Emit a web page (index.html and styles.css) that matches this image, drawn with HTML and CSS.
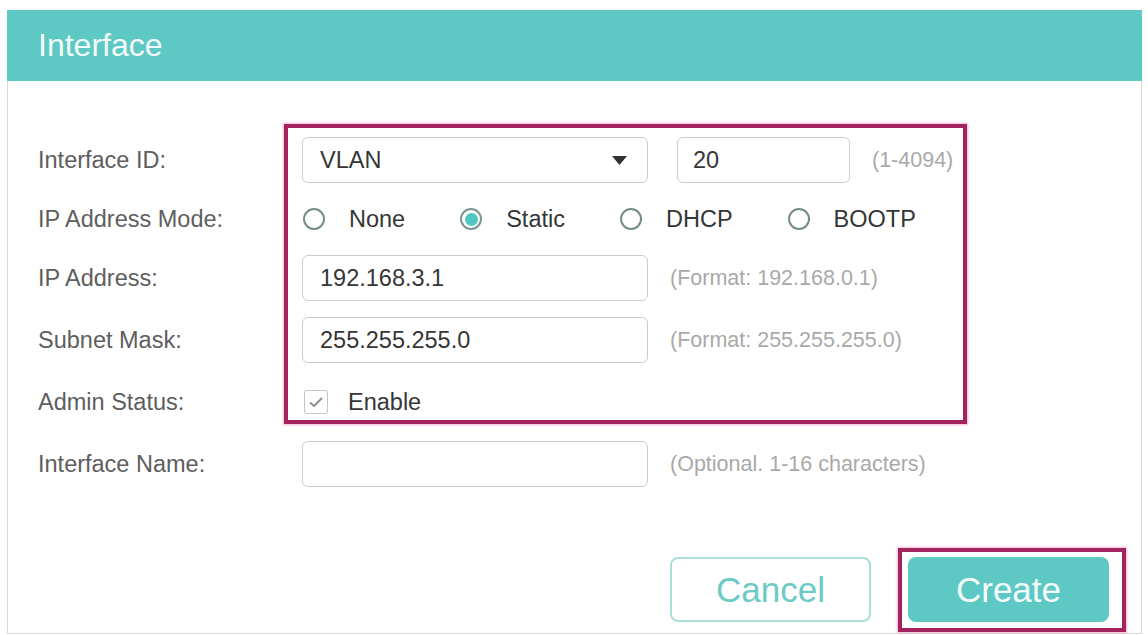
FILE: index.html
```html
<!DOCTYPE html>
<html lang="en">
<head>
<meta charset="utf-8">
<title>Interface</title>
<link rel="stylesheet" href="styles.css">
</head>
<body>
<div class="panel">
  <div class="panel-head">Interface</div>
  <div class="panel-body">
    <div class="form">
      <div class="label">Interface ID:</div>
      <div class="field">
        <div class="select">
          <span>VLAN</span>
          <svg class="caret" width="15" height="9" viewBox="0 0 15 9"><path d="M0 0H15L7.5 9Z" fill="#333"/></svg>
        </div>
        <div class="input num">20</div>
        <span class="hint hint-id">(1-4094)</span>
      </div>

      <div class="label">IP Address Mode:</div>
      <div class="field radios">
        <label class="radio"><span class="dot"></span>None</label>
        <label class="radio"><span class="dot on"></span>Static</label>
        <label class="radio"><span class="dot"></span>DHCP</label>
        <label class="radio"><span class="dot"></span>BOOTP</label>
      </div>

      <div class="label">IP Address:</div>
      <div class="field">
        <div class="input wide">192.168.3.1</div>
        <span class="hint">(Format: 192.168.0.1)</span>
      </div>

      <div class="label">Subnet Mask:</div>
      <div class="field">
        <div class="input wide">255.255.255.0</div>
        <span class="hint">(Format: 255.255.255.0)</span>
      </div>

      <div class="label">Admin Status:</div>
      <div class="field">
        <label class="check">
          <span class="box"><svg width="16" height="12" viewBox="0 0 16 12"><path d="M2 6.5L6 10L14 2" fill="none" stroke="#8a8a8a" stroke-width="1.8"/></svg></span>
          Enable
        </label>
      </div>

      <div class="label">Interface Name:</div>
      <div class="field">
        <div class="input wide"></div>
        <span class="hint">(Optional. 1-16 characters)</span>
      </div>
    </div>
    <div class="mark mark-fields"></div>
  </div>
  <div class="actions">
    <button class="btn btn-cancel">Cancel</button>
    <span class="mark-btn"><button class="btn btn-create">Create</button></span>
  </div>
</div>
</body>
</html>
```

FILE: styles.css
```css
html, body {
  margin: 0;
  padding: 0;
  background: #ffffff;
}
body {
  font-family: "Liberation Sans", Arial, sans-serif;
  color: #555555;
}
.panel {
  position: relative;
  margin: 10px 0 0 7px;
  width: 1135px;
  height: 624px;
  box-sizing: border-box;
  border: 1px solid #d9d9d9;
  border-top: 0;
}
.panel-head {
  height: 71px;
  margin: 0 -1px;
  background: #5ec8c4;
  color: #f2fbfa;
  font-size: 32px;
  line-height: 71px;
  padding-left: 31px;
}
.panel-body {
  position: relative;
  padding: 56px 0 0 30px;
}
.form {
  display: grid;
  grid-template-columns: 264px 1fr;
  grid-template-rows: 46px 40px 46px 46px 46px 46px;
  row-gap: 16px;
  font-size: 23.5px;
}
.label {
  display: flex;
  align-items: center;
  color: #5e5e5e;
}
.field {
  display: flex;
  align-items: center;
  color: #363636;
}
.select, .input {
  box-sizing: border-box;
  height: 46px;
  border: 1.5px solid #cbcbcb;
  border-radius: 6px;
  display: flex;
  align-items: center;
  background: #fff;
}
.select {
  width: 346px;
  padding: 0 20px 0 17px;
  justify-content: space-between;
}
.input.wide {
  width: 346px;
  padding-left: 17px;
}
.input.num {
  width: 173px;
  margin-left: 29px;
  padding-left: 15px;
}
.hint {
  font-size: 21.5px;
  color: #a9a9a9;
  margin-left: 22px;
}
.hint-id {
  margin-left: 22px;
}
.radios {
  gap: 55px;
  padding-left: 1px;
}
.radio {
  display: flex;
  align-items: center;
  gap: 24px;
}
.dot {
  box-sizing: border-box;
  width: 22px;
  height: 22px;
  border-radius: 50%;
  border: 2px solid #758c8a;
  position: relative;
}
.dot.on {
  border-color: #7a9593;
}
.dot.on::after {
  content: "";
  position: absolute;
  left: 2.5px;
  top: 2.5px;
  width: 13px;
  height: 13px;
  border-radius: 50%;
  background: #4fc6c0;
}
.check {
  display: flex;
  align-items: center;
  gap: 20px;
  padding-left: 2px;
}
.box {
  box-sizing: border-box;
  width: 24px;
  height: 24px;
  border: 1.5px solid #c4c4c4;
  border-radius: 3px;
  display: flex;
  align-items: center;
  justify-content: center;
}
.mark {
  position: absolute;
  box-sizing: border-box;
  border: 4px solid #a2235e;
  box-shadow: 0 0 2px 1px rgba(235, 120, 180, 0.55);
}
.mark-fields {
  left: 276px;
  top: 43px;
  width: 683px;
  height: 300px;
}
.actions {
  display: flex;
  justify-content: flex-end;
  align-items: flex-start;
  gap: 27px;
  margin-top: 61px;
  padding-right: 15px;
}
.btn {
  box-sizing: border-box;
  width: 201px;
  height: 65px;
  border-radius: 8px;
  font-family: "Liberation Sans", Arial, sans-serif;
  font-size: 35px;
  padding: 0;
}
.btn-cancel {
  margin-top: 9px;
  background: #fff;
  border: 2px solid #a9dedb;
  color: #6ccac5;
}
.mark-btn {
  display: block;
  border: 4px solid #a2235e;
  box-shadow: 0 0 2px 1px rgba(235, 120, 180, 0.55);
  padding: 5px 13px 6px 6px;
}
.btn-create {
  display: block;
  background: #5ec8c4;
  border: 0;
  color: #f4fcfb;
}
```
